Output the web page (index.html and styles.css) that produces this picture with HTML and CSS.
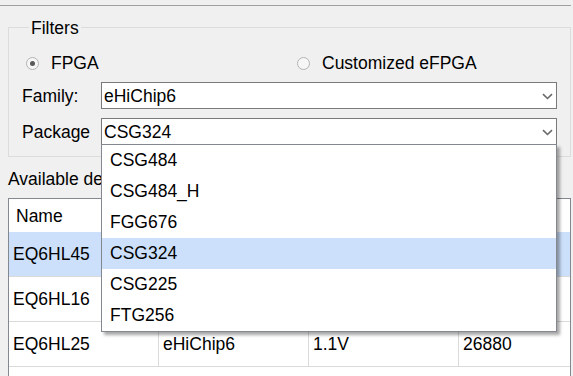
FILE: index.html
```html
<!DOCTYPE html>
<html>
<head>
<meta charset="utf-8">
<link rel="stylesheet" href="styles.css">
</head>
<body>
<div class="topline"></div>
<fieldset class="filters">
  <legend>Filters</legend>
  <div class="radios">
    <label class="radio"><span class="dot checked"></span>FPGA</label>
    <label class="radio"><span class="dot"></span>Customized eFPGA</label>
  </div>
  <div class="field">
    <span class="flabel">Family:</span>
    <div class="combo">
      <span class="value">eHiChip6</span>
      <svg class="chev" width="11" height="7" viewBox="0 0 11 7"><path d="M1 1.2 L5.5 5.5 L10 1.2" fill="none" stroke="#6a6a6a" stroke-width="1.6"/></svg>
    </div>
  </div>
  <div class="field">
    <span class="flabel">Package</span>
    <div class="combo">
      <span class="value">CSG324</span>
      <svg class="chev" width="11" height="7" viewBox="0 0 11 7"><path d="M1 1.2 L5.5 5.5 L10 1.2" fill="none" stroke="#6a6a6a" stroke-width="1.6"/></svg>
      <ul class="popup">
        <li>CSG484</li>
        <li>CSG484_H</li>
        <li>FGG676</li>
        <li class="sel">CSG324</li>
        <li>CSG225</li>
        <li>FTG256</li>
      </ul>
    </div>
  </div>
</fieldset>
<div class="avail">Available devices:</div>
<div class="devices">
  <div class="row head">
    <div class="cell">Name</div><div class="cell"></div><div class="cell"></div><div class="cell"></div>
  </div>
  <div class="row selected">
    <div class="cell">EQ6HL45</div><div class="cell"></div><div class="cell"></div><div class="cell"></div>
  </div>
  <div class="row">
    <div class="cell">EQ6HL16</div><div class="cell"></div><div class="cell"></div><div class="cell"></div>
  </div>
  <div class="row">
    <div class="cell">EQ6HL25</div><div class="cell">eHiChip6</div><div class="cell">1.1V</div><div class="cell">26880</div>
  </div>
</div>
</body>
</html>
```
FILE: styles.css
```css
html, body {
  margin: 0;
  padding: 0;
  background: #f0f0f0;
  overflow: hidden;
}
body {
  font-family: "Liberation Sans", Arial, sans-serif;
  font-size: 17.5px;
  line-height: 20px;
  color: #000;
  width: 573px;
  height: 376px;
}
.topline {
  margin-top: 5px;
  width: 571px;
  height: 1px;
  background: #a0a0a0;
}
.filters {
  box-sizing: border-box;
  width: 563px;
  margin: 10px 0 0 8px;
  padding: 15px 12px 11px 13px;
  border: 1px solid #dcdcdc;
  min-inline-size: 0;
}
.filters legend {
  margin-left: 7px;
  padding: 2px 2px 0;
  line-height: 20px;
}
.radios {
  display: grid;
  grid-template-columns: 271px auto;
  margin-left: 4px;
}
.radio {
  display: flex;
  align-items: center;
  gap: 12px;
  height: 20px;
}
.dot {
  box-sizing: border-box;
  width: 13px;
  height: 13px;
  border-radius: 50%;
  border: 1px solid #b4b4b4;
  background: #f6f6f6;
  display: flex;
  align-items: center;
  justify-content: center;
}
.dot.checked::after {
  content: "";
  width: 5px;
  height: 5px;
  border-radius: 50%;
  background: #5a5a5a;
}
.field {
  display: flex;
  align-items: center;
  margin-top: 9px;
}
.flabel {
  width: 79px;
}
.combo {
  position: relative;
  box-sizing: border-box;
  width: 456px;
  height: 27px;
  border: 1px solid #7a7a7a;
  background: #fff;
  padding-left: 2px;
  display: flex;
  align-items: center;
  justify-content: space-between;
}
.chev {
  margin-right: 3px;
  margin-top: 1px;
}
.popup {
  position: absolute;
  z-index: 5;
  left: -1px;
  top: 25px;
  box-sizing: border-box;
  width: 456px;
  margin: 0;
  padding: 0;
  list-style: none;
  background: #fff;
  border: 1px solid #828790;
  box-shadow: 3px 3px 3px rgba(0, 0, 0, 0.35);
}
.popup li {
  height: 31px;
  line-height: 31px;
  padding-left: 8px;
}
.popup li.sel {
  background: #cce0fb;
}
.avail {
  margin: 12px 0 0 8px;
  height: 20px;
  white-space: nowrap;
}
.devices {
  box-sizing: border-box;
  width: 563px;
  height: 178px;
  margin: 9px 0 0 8px;
  border: 1px solid #828790;
  border-bottom: none;
  background: #fff;
}
.row {
  display: grid;
  grid-template-columns: 150px 150px 150px 111px;
}
.cell {
  box-sizing: border-box;
  height: 45px;
  padding-left: 4px;
  display: flex;
  align-items: center;
  border-right: 1px solid #dadada;
  border-bottom: 1px solid #dadada;
}
.cell:last-child {
  border-right: none;
}
.head .cell {
  height: 33px;
  padding-left: 7px;
  border-bottom: none;
}
.selected .cell {
  background: #cce0fb;
}
```
